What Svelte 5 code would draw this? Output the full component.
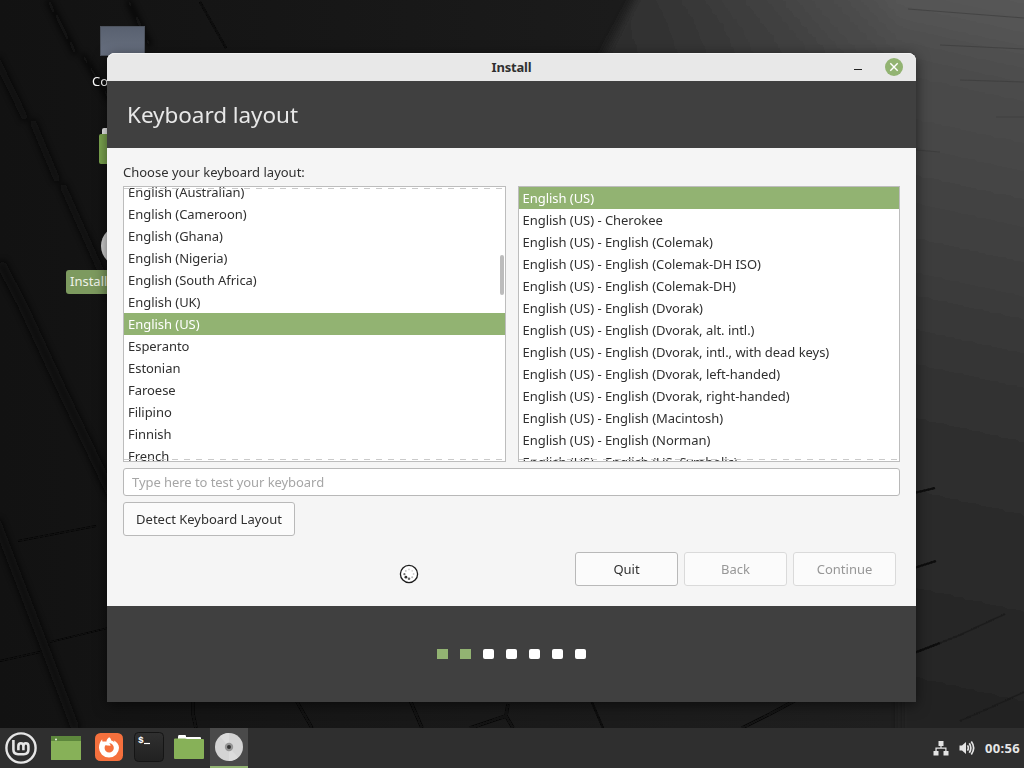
<script lang="ts">
	const layouts = [
		"English (Australian)",
		"English (Cameroon)",
		"English (Ghana)",
		"English (Nigeria)",
		"English (South Africa)",
		"English (UK)",
		"English (US)",
		"Esperanto",
		"Estonian",
		"Faroese",
		"Filipino",
		"Finnish",
		"French"
	];

	const variants = [
		"English (US)",
		"English (US) - Cherokee",
		"English (US) - English (Colemak)",
		"English (US) - English (Colemak-DH ISO)",
		"English (US) - English (Colemak-DH)",
		"English (US) - English (Dvorak)",
		"English (US) - English (Dvorak, alt. intl.)",
		"English (US) - English (Dvorak, intl., with dead keys)",
		"English (US) - English (Dvorak, left-handed)",
		"English (US) - English (Dvorak, right-handed)",
		"English (US) - English (Macintosh)",
		"English (US) - English (Norman)",
		"English (US) - English (US, Symbolic)"
	];

	let layout = $state("English (US)");
	let variant = $state("English (US)");
	let step = 2;
</script>

<div class="desktop">
	<svg class="wallpaper" viewBox="0 0 1024 768" preserveAspectRatio="none" aria-hidden="true">
		<defs>
			<linearGradient id="right" gradientUnits="userSpaceOnUse" x1="1024" y1="0" x2="860" y2="740">
				<stop offset="0" stop-color="#585858" />
				<stop offset="0.12" stop-color="#4b4b4b" />
				<stop offset="0.3" stop-color="#414141" />
				<stop offset="0.55" stop-color="#303030" />
				<stop offset="0.8" stop-color="#282828" />
				<stop offset="1" stop-color="#212121" />
			</linearGradient>
			<linearGradient id="edge" gradientUnits="userSpaceOnUse" x1="610" y1="0" x2="900" y2="0">
				<stop offset="0" stop-color="#1b1b1b" stop-opacity="0.6" />
				<stop offset="1" stop-color="#1b1b1b" stop-opacity="0" />
			</linearGradient>
			<linearGradient id="base" x1="0" y1="0" x2="1" y2="0">
				<stop offset="0" stop-color="#121212" />
				<stop offset="0.6" stop-color="#1b1b1b" />
				<stop offset="1" stop-color="#212121" />
			</linearGradient>
			<filter id="soft"><feGaussianBlur stdDeviation="3" /></filter>
			<filter id="blend"><feGaussianBlur stdDeviation="5" /></filter>
			<filter id="fine"><feGaussianBlur stdDeviation="0.7" /></filter>
		</defs>
		<rect width="1024" height="768" fill="url(#base)" />
		<g filter="url(#blend)">
			<path d="M645 -20H1050V790H900V690H700L600 62Z" fill="url(#right)" />
			<path d="M645 -20H1050V790H900V690H700L600 62Z" fill="url(#edge)" />
		</g>
		<g stroke="#080808" fill="none" filter="url(#soft)" opacity="0.8">
			<path d="M48 0L76 54M82 54L110 100M128 0L150 46" stroke-width="5" />
			<path d="M-4 58L26 120M32 120L58 182M62 184L112 296" stroke-width="7" />
			<path d="M0 262L22 304L62 390L112 495" stroke-width="10" />
			<path d="M-4 520L42 640L76 730" stroke-width="9" />
		</g>
		<g stroke="#0a0a0a" fill="none" filter="url(#fine)">
			<path d="M200 2L226 48" stroke-width="2.2" />
			<path d="M18 541L96 526M0 661L40 652M50 642L108 628" stroke-width="1.8" opacity="0.8" />
			<path d="M914 493L935 488M914 568L936 561M914 653L940 643" stroke-width="2" />
			<path d="M940 643L960 635L1005 614M960 721L994 706M994 706L1024 692" stroke-width="1.5" stroke="#1a1a1a" opacity="0.8" />
			<path d="M193 700V714L196 728M296 700L312 728M410 700L422 728M508 704L506 716L513 728M506 716L470 728M742 728L770 714L796 700" stroke-width="3.5" opacity="0.7" />
			<path d="M591 700L603 728" stroke-width="2" />
		</g>
		<path d="M908 9L1024 18M940 45L1024 49M960 80L1024 82M996 117H1024M916 150L940 152" stroke="#383838" fill="none" opacity="0.6" />
	</svg>

	<div class="shortcut computer">
		<div class="screen"></div>
		<span>Computer</span>
	</div>
	<div class="shortcut home"><div class="tab"></div></div>
	<div class="shortcut disc"></div>
	<div class="shortcut install">Install</div>

	<main class="window">
		<div class="titlebar">
			<span class="title">Install</span>
			<button class="minimize" aria-label="Minimize"></button>
			<button class="close" aria-label="Close">
				<svg viewBox="0 0 18 18" width="18" height="18"><path d="M5.3 5.3l7.4 7.4M12.7 5.3l-7.4 7.4" stroke="#fff" stroke-width="1.4" /></svg>
			</button>
		</div>

		<header><h1>Keyboard layout</h1></header>

		<section class="page">
			<p class="prompt">Choose your keyboard layout:</p>
			<div class="lists">
				<div class="list scrolled">
					{#each layouts as name}
						<button class="row" class:selected={layout === name} onclick={() => (layout = name)}>{name}</button>
					{/each}
					<div class="undershoot top"></div>
					<div class="undershoot"></div>
					<div class="thumb"></div>
				</div>
				<div class="list">
					{#each variants as name}
						<button class="row" class:selected={variant === name} onclick={() => (variant = name)}>{name}</button>
					{/each}
					<div class="undershoot"></div>
				</div>
			</div>
			<input placeholder="Type here to test your keyboard" />
			<button class="btn detect">Detect Keyboard Layout</button>
			<div class="actions">
				<button class="btn">Quit</button>
				<button class="btn" disabled>Back</button>
				<button class="btn" disabled>Continue</button>
			</div>
		</section>

		<footer>
			{#each { length: 7 }, index}
				<div class="dot" class:done={index < step}></div>
			{/each}
		</footer>
	</main>

	<!-- busy pointer -->
	<svg class="cursor" viewBox="0 0 20 20" width="20" height="20">
		<circle cx="10" cy="10" r="8.6" fill="#fff" stroke="#1c1c1c" stroke-width="1.3" />
		<g fill="#333">
			<circle cx="10" cy="5.4" r="0.9" opacity="0.25" />
			<circle cx="13.2" cy="6.8" r="0.9" opacity="0.2" />
			<circle cx="14.6" cy="10" r="0.9" opacity="0.25" />
			<circle cx="13.2" cy="13.2" r="1" opacity="0.35" />
			<circle cx="10" cy="14.8" r="1.3" opacity="0.75" />
			<circle cx="6.9" cy="13.2" r="1.4" />
			<circle cx="5.4" cy="10.2" r="1.1" opacity="0.7" />
			<circle cx="6.8" cy="6.9" r="0.9" opacity="0.3" />
		</g>
	</svg>

	<nav class="panel">
		<div class="launcher menu">
			<svg viewBox="0 0 32 32" width="32" height="32" fill="none" stroke="#e6e6e6">
				<circle cx="16" cy="16" r="14.6" stroke-width="2.4" />
				<path d="M8.4 8V17.6Q8.4 22.2 13 22.2H18.8Q23.4 22.2 23.4 17.8V14.2Q23.4 11.3 20.9 11.3Q18.4 11.3 18.4 14.2V18.2M18.4 14.2Q18.4 11.3 15.9 11.3Q13.4 11.3 13.4 14.2V18.2" stroke-width="2.6" />
			</svg>
		</div>
		<div class="launcher files">
			<svg viewBox="0 0 32 32" width="32" height="32">
				<rect x="1" y="4" width="30" height="24" rx="0.6" fill="#87b158" />
				<path d="M1 4H31V9H1Z" fill="#5d873c" />
				<circle cx="6" cy="7.4" r="1" fill="#eff6e5" />
			</svg>
		</div>
		<div class="launcher">
			<svg viewBox="0 0 32 32" width="32" height="32">
				<rect x="2" y="1" width="28" height="28" rx="5.5" fill="#f5703d" />
				<path d="M16.1 5.2C17.7 6.2 18.1 7.4 18.2 8.6C19.5 8.8 20.8 9.6 21.4 10.6C21.4 9.5 21 8.8 20.6 8.2C24 9.8 26 12.6 26 15.8A10 9.7 0 0 1 6 15.8C6 12.2 7.2 9.4 9.2 7.3C9.1 8.4 9.3 9 9.8 9.8C11 9.3 12.2 9.4 13.3 9.8C13.6 8 14.5 6.2 16.1 5.2Z" fill="#fff" />
				<path d="M12.2 13.6C13.2 12.9 14 13.4 14.9 13.6L17.6 13.7C17.4 12.6 17 11.8 16 11C19 11.4 21 13.4 20.8 16.2C20.6 18.8 18.6 20.5 16.2 20.5C13.6 20.5 11.7 18.6 11.6 16.2C11.6 15.2 11.7 14.4 12.2 13.6Z" fill="#f5703d" />
			</svg>
		</div>
		<div class="launcher">
			<svg viewBox="0 0 32 32" width="32" height="32">
				<defs>
					<linearGradient id="term" x1="0" y1="0" x2="0" y2="1">
						<stop offset="0" stop-color="#303030" />
						<stop offset="1" stop-color="#212121" />
					</linearGradient>
				</defs>
				<rect x="1.5" y="0.5" width="29" height="29" rx="4" fill="url(#term)" stroke="#151515" />
				<text x="5" y="10.5" font-size="9.5" fill="#fff" font-family="Liberation Mono, monospace" font-weight="bold">$</text>
				<path d="M11 11.5H17" stroke="#fff" stroke-width="1.2" />
			</svg>
		</div>
		<div class="launcher">
			<svg viewBox="0 0 32 32" width="32" height="32">
				<path d="M5 7V5Q5 3 6 3H12Q13 3 13 4V5H27Q28 5 28 6V9H5Z" fill="#fff" />
				<path d="M1 7.5Q1 6.5 2 6.5H12L14 7H30Q31 7 31 8V26Q31 27 30 27H2Q1 27 1 26Z" fill="#87b158" />
			</svg>
		</div>
		<div class="launcher active">
			<svg viewBox="0 0 32 32" width="32" height="32">
				<circle cx="16" cy="16" r="14" fill="#d4d4d4" />
				<path d="M16 16L7 5.5A14 14 0 0 1 16 2Z M16 16L25 26.5A14 14 0 0 1 16 30Z" fill="#dcdcdc" />
				<circle cx="16" cy="16" r="4.2" fill="#959595" />
				<circle cx="16" cy="16" r="2" fill="#333" />
			</svg>
		</div>
		<div class="tray">
			<svg viewBox="0 0 16 16" width="16" height="16">
				<path d="M5.5 1H10.5V6H8.6V7.5H13.5V11H15.5V15.5H10.5V11H12.3V8.7H3.7V11H5.5V15.5H0.5V11H2.4V7.5H7.4V6H5.5Z" fill="#e4e4e4" />
			</svg>
			<svg viewBox="0 0 16 16" width="16" height="16" fill="none" stroke="#e4e4e4">
				<path d="M0.5 5.5H3L7 2V14L3 10.5H0.5Z" fill="#e4e4e4" stroke="none" />
				<path d="M8.5 5.4Q10.2 8 8.5 10.6M10.3 3.2Q13.4 8 10.3 12.8M12.3 1.6Q17 8 12.3 14.4" stroke-width="1.7" />
			</svg>
			<span class="clock">00:56</span>
		</div>
	</nav>
</div>

<style>
	:global(body) {
		margin: 0;
		overflow: hidden;
	}
	.desktop {
		position: relative;
		display: flex;
		flex-direction: column;
		width: 1024px;
		height: 768px;
		overflow: hidden;
		background: #151515;
		font-family: "Noto Sans", "Open Sans", sans-serif;
		font-size: 13px;
		color: #303030;
	}
	.wallpaper {
		position: absolute;
		inset: 0;
		width: 100%;
		height: 100%;
	}
	button,
	input {
		font: inherit;
		box-sizing: border-box;
	}

	/* desktop icons, partly under the window */
	.shortcut {
		position: absolute;
		color: #fff;
		white-space: nowrap;
	}
	.computer {
		left: 92px;
		top: 26px;
	}
	.computer span {
		display: block;
		margin-top: 15px;
		line-height: 20px;
	}
	.screen {
		width: 45px;
		height: 30px;
		margin-left: 8px;
		box-sizing: border-box;
		border: 1px solid #4d535e;
		background: linear-gradient(#596170, #687080);
	}
	.home {
		left: 99px;
		top: 134px;
		width: 45px;
		height: 30px;
		background: #7da650;
		border-radius: 2px;
	}
	.tab {
		width: 14px;
		height: 6px;
		margin: -6px 0 0 3px;
		background: #f0f0f0;
		border-radius: 2px 2px 0 0;
	}
	.disc {
		left: 101px;
		top: 226px;
		width: 40px;
		height: 40px;
		border-radius: 50%;
		background: #d2d2d2;
	}
	.install {
		left: 66px;
		top: 270px;
		width: 60px;
		height: 24px;
		padding: 0 4px;
		box-sizing: border-box;
		line-height: 22px;
		border-radius: 3px;
		background: #7d9a5f;
		color: #eef2e8;
	}

	.window {
		position: relative;
		flex: none;
		width: 809px;
		height: 649px;
		margin: 53px 0 0 107px;
		display: flex;
		flex-direction: column;
		border-radius: 8px 8px 0 0;
		background: #f5f5f5;
		box-shadow: 0 3px 14px rgba(0, 0, 0, 0.55);
	}
	.titlebar {
		height: 28px;
		display: grid;
		grid-template-columns: 1fr 8px 23px 18px 13px;
		align-items: center;
		border-radius: 8px 8px 0 0;
		background: #e8e8e8;
		box-shadow: inset 0 1px #f2f2f2;
	}
	.title {
		font-weight: bold;
		text-align: center;
		padding-left: 62px;
		letter-spacing: -0.2px;
	}
	.minimize {
		width: 8px;
		height: 1px;
		margin-top: 4px;
		padding: 0;
		border: 0;
		background: #222;
	}
	.close {
		grid-column: 4;
		width: 18px;
		height: 18px;
		padding: 0;
		border: 0;
		border-radius: 50%;
		background: #92b372;
	}
	.close svg {
		display: block;
	}
	header {
		height: 67px;
		display: flex;
		align-items: center;
		padding-left: 20px;
		background: #404040;
	}
	h1 {
		margin: 0;
		font-size: 22.5px;
		font-weight: normal;
		letter-spacing: -0.05px;
		color: #e8e8e8;
	}
	.page {
		flex: 1;
		display: flex;
		flex-direction: column;
		padding: 15px 16px 0;
	}
	.prompt {
		margin: 0;
		height: 23px;
		line-height: 19px;
	}
	.lists {
		display: flex;
		gap: 12px;
	}
	.list {
		position: relative;
		flex: 1;
		height: 276px;
		box-sizing: border-box;
		border: 1px solid #bdbdbd;
		background: #fff;
		overflow: hidden;
	}
	.row {
		display: block;
		width: 100%;
		height: 22px;
		padding: 0 4px;
		border: 0;
		background: none;
		line-height: 22px;
		letter-spacing: -0.04px;
		text-align: left;
		white-space: nowrap;
		color: #303030;
	}
	.scrolled .row:first-child {
		margin-top: -6px;
	}
	.row.selected {
		background: #92b372;
		color: #fff;
	}
	.undershoot {
		position: absolute;
		left: 0;
		right: 0;
		bottom: 1px;
		height: 1px;
		background: repeating-linear-gradient(90deg, #cacaca 0 6px, transparent 6px 12px);
	}
	.undershoot.top {
		top: 1px;
		bottom: auto;
	}
	.thumb {
		position: absolute;
		right: 1px;
		top: 68px;
		width: 4px;
		height: 40px;
		border-radius: 2px;
		background: #bcbcbc;
	}
	input {
		height: 28px;
		margin: 6px 0;
		padding: 0 8px;
		border: 1px solid #b8b8b8;
		border-radius: 3px;
		background: #fff;
		letter-spacing: -0.06px;
	}
	input::placeholder {
		color: #a6a6a6;
		opacity: 1;
	}
	.btn {
		height: 34px;
		width: 103px;
		padding: 0;
		border: 1px solid #b9b9b9;
		border-radius: 3px;
		background: #fbfbfb;
		color: #303030;
	}
	.btn:disabled {
		color: #979797;
		border-color: #dadada;
	}
	.btn.detect {
		width: 172px;
	}
	.actions {
		display: flex;
		justify-content: flex-end;
		gap: 6px;
		margin: 16px 4px 0 0;
	}
	footer {
		height: 96px;
		display: flex;
		align-items: center;
		justify-content: center;
		gap: 12px;
		background: #404040;
	}
	.dot {
		width: 11px;
		height: 10px;
		border-radius: 2px;
		background: #fff;
	}
	.dot.done {
		background: #92b372;
		border-radius: 0;
	}
	.cursor {
		position: absolute;
		left: 399px;
		top: 564px;
	}

	.panel {
		position: relative;
		margin-top: auto;
		height: 40px;
		display: flex;
		background: #2f2f2f;
	}
	.launcher {
		width: 40px;
		display: flex;
		align-items: center;
		justify-content: center;
	}
	.menu {
		margin: 0 5px 0 1px;
	}
	.files {
		margin-right: 3px;
	}
	.active {
		width: 38px;
		box-sizing: border-box;
		margin-left: 1px;
		background: #4a4a4a;
		border-bottom: 2px solid #92b372;
	}
	.tray {
		margin-left: auto;
		padding-right: 4px;
		display: flex;
		align-items: center;
		gap: 10px;
		color: #e6e6e6;
	}
	.clock {
		font-weight: bold;
		letter-spacing: 0.3px;
	}
</style>
